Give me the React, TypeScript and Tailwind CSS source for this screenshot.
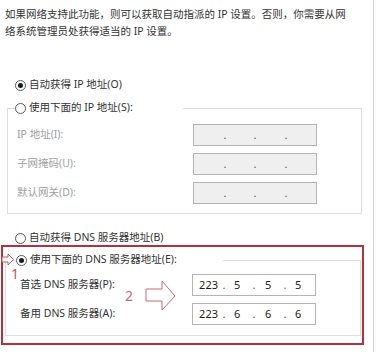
import React from 'react';

const Radio: React.FC<{ checked?: boolean }> = ({ checked }) => (
  <span className="w-[11px] h-[11px] rounded-full border border-[#5a5a5a] bg-white flex items-center justify-center shrink-0">
    {checked && <span className="w-[5px] h-[5px] rounded-full bg-[#1a1a1a]" />}
  </span>
);

// ip-style field with three dots; values are optional
const IpField: React.FC<{ values?: string[]; disabled?: boolean }> = ({ values = ['', '', '', ''], disabled }) => (
  <div
    className={`w-[124px] h-[22px] border flex items-center text-[11px] text-[#222] ${
      disabled ? 'bg-[#efefef] border-[#b4b4b4]' : 'bg-white border-[#b4b4b4]'
    }`}
  >
    <span className="w-[25px] text-right">{values[0]}</span>
    <span className="w-[12px] text-center text-[#555]">.</span>
    <span className="w-[18px] pl-[4px]">{values[1]}</span>
    <span className="w-[12px] text-center text-[#555]">.</span>
    <span className="w-[19px] pl-[5px]">{values[2]}</span>
    <span className="w-[12px] text-center text-[#555]">.</span>
    <span className="pl-[4px]">{values[3]}</span>
  </div>
);

const ipRows = ['IP 地址(I):', '子网掩码(U):', '默认网关(D):'];

export default function App() {
  return (
    <div
      className="w-[377px] h-[352px] bg-white overflow-hidden relative text-[10.5px] text-[#333]"
      style={{ fontFamily: '"Noto Sans", "Noto Sans CJK SC", sans-serif' }}
    >
      <div className="w-[374px] h-full border-r border-[#d2d2d2] flex flex-col">
        {/* intro text */}
        <p className="pl-[5px] pt-[6px] leading-[17px]">
          如果网络支持此功能，则可以获取自动指派的 IP 设置。否则，你需要从网
          <br />
          络系统管理员处获得适当的 IP 设置。
        </p>

        {/* auto ip */}
        <div className="mt-[37px] ml-[15px] h-[16px] flex items-center gap-[3px]">
          <Radio checked />
          <span>自动获得 IP 地址(O)</span>
        </div>

        {/* manual ip group */}
        <fieldset className="mt-[7px] ml-[7px] w-[355px] border border-[#dedede] px-[7px] pb-[9px]">
          <legend className="w-[168px] h-[16px] bg-white flex items-center gap-[3px]">
            <Radio />
            <span>使用下面的 IP 地址(S):</span>
          </legend>
          <div className="pt-[8px] flex flex-col gap-[7px]">
            {ipRows.map((label) => (
              <div key={label} className="h-[22px] flex items-center">
                <span className="w-[178px] pl-[2px] text-[#a0a0a0]">{label}</span>
                <IpField disabled />
              </div>
            ))}
          </div>
        </fieldset>

        {/* auto dns */}
        <div className="mt-[17px] ml-[15px] h-[14px] flex items-center gap-[3px]">
          <Radio />
          <span>自动获得 DNS 服务器地址(B)</span>
        </div>

        {/* highlighted manual dns */}
        <div className="ml-[1px] w-[363px] border-2 border-[#b3303c] pt-[5px] pb-[7px]">
          <fieldset className="ml-[2px] w-[356px] border border-[#dedede] px-[10px] pb-[10px]">
            <legend className="w-[207px] h-[16px] bg-white flex items-center gap-[3px]">
              <Radio checked />
              <span>使用下面的 DNS 服务器地址(E):</span>
            </legend>
            <div className="pt-[6px] flex flex-col gap-[7px]">
              <div className="h-[22px] flex items-center">
                <span className="w-[176px] pl-[4px]">首选 DNS 服务器(P):</span>
                <IpField values={['223', '5', '5', '5']} />
              </div>
              <div className="h-[22px] flex items-center">
                <span className="w-[176px] pl-[4px]">备用 DNS 服务器(A):</span>
                <IpField values={['223', '6', '6', '6']} />
              </div>
            </div>
          </fieldset>
        </div>
      </div>

      {/* annotations */}
      <svg className="absolute left-[1px] top-[253px]" width="14" height="13" viewBox="0 0 14 13">
        <polygon points="1,4 7,4 7,1 12.5,6.5 7,12 7,9 1,9" fill="white" stroke="#c0545c" strokeWidth="1" />
      </svg>
      <span className="absolute left-[11px] top-[266px] text-[14px] leading-[16px] text-[#c0545c]">1</span>
      <span className="absolute left-[125px] top-[288px] text-[14px] leading-[16px] text-[#c46a72]">2</span>
      <svg className="absolute left-[145px] top-[280px]" width="32" height="32" viewBox="0 0 32 32">
        <polygon points="1,9 17,9 17,1 30,16 17,30 17,21 1,21" fill="white" stroke="#c46a72" strokeWidth="1" />
      </svg>
    </div>
  );
}
